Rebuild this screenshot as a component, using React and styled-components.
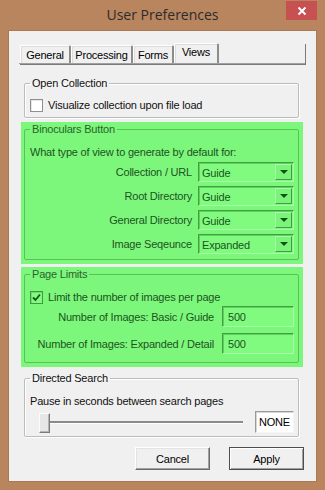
import React from 'react';
import styled, { createGlobalStyle } from 'styled-components';

const GlobalStyle = createGlobalStyle`
	html, body {
		margin: 0;
		padding: 0;
		width: 325px;
		height: 490px;
		overflow: hidden;
		background: #b9855f;
	}
	* {
		box-sizing: border-box;
	}
`;

const FONT = `"Liberation Sans", Arial, sans-serif`;

// window chrome
const Window = styled.div`
	width: 325px;
	height: 490px;
	background: #b9855f;
	display: flex;
	flex-direction: column;
	font-family: ${FONT};
	font-size: 11px;
	letter-spacing: -0.2px;
	color: #111;
`;

const TitleBar = styled.div`
	height: 30px;
	display: grid;
	grid-template-columns: 1fr auto 1fr;
	align-items: start;
`;

const Title = styled.div`
	grid-column: 2;
	line-height: 30px;
	font-family: "Open Sans", "Noto Sans", sans-serif;
	font-size: 14px;
	letter-spacing: 0;
	color: #2b2b2b;
`;

const CloseButton = styled.div`
	grid-column: 3;
	justify-self: end;
	margin-right: 8px;
	margin-top: 1px;
	width: 31px;
	height: 19px;
	background: #c75050;
	display: flex;
	align-items: center;
	justify-content: center;
`;

const Client = styled.div`
	margin: 0 8px;
	height: 452px;
	background: #f0f0f0;
	border: 1px solid #a67a57;
	padding: 12px 10px 0 10px;
	display: flex;
	flex-direction: column;
`;

// tabs
const TabStrip = styled.div`
	height: 21px;
	padding-left: 1px;
	display: flex;
	align-items: flex-end;
	border-bottom: 1px solid #a0a0a0;
	box-shadow: 1px 1px 0 #7a7a7a;
	margin-right: 1px;
`;

const Tab = styled.div`
	width: ${p => p.$w}px;
	height: ${p => (p.$active ? 20 : 18)}px;
	display: flex;
	align-items: center;
	justify-content: center;
	padding-bottom: ${p => (p.$active ? 3 : 0)}px;
	background: #f0f0f0;
	border-top: 1px solid #fff;
	border-left: 1px solid #fff;
	border-right: 2px solid #8c8c8c;
	border-radius: 2px 2px 0 0;
	box-shadow: inset 1px 1px 0 #dcdcdc;
	color: #000;
`;

const Panel = styled.div`
	padding: 0 3px 0 2px;
	display: flex;
	flex-direction: column;
`;

// group boxes
const Section = styled.div`
	margin-top: ${p => p.$mt || 0}px;
	padding: ${p => (p.$hl ? 0 : 4)}px 4px 4px 3px;
	background: ${p => (p.$hl ? '#7cf77c' : 'transparent')};
	color: ${p => (p.$hl ? '#1d541d' : '#111')};
`;

const Group = styled.fieldset`
	margin: 0;
	min-width: 0;
	padding: 0 4px ${p => p.$pb}px 5px;
	border: 1px solid ${p => (p.$hl ? '#55c455' : '#bcbcbc')};
	border-radius: 2px;
	box-shadow: ${p => (p.$hl ? 'none' : 'inset 1px 1px 0 #fff, 1px 1px 0 #fff')};
`;

const Legend = styled.legend`
	padding: 0 2px;
	margin-left: 0;
	height: 14px;
	line-height: 14px;
	font-size: 11px;
	color: ${p => (p.$hl ? '#2a652a' : '#111')};
`;

const Line = styled.div`
	margin-top: ${p => p.$mt || 0}px;
	height: 16px;
	line-height: 16px;
	white-space: nowrap;
`;

const CheckRow = styled.label`
	margin-top: ${p => p.$mt || 0}px;
	height: 16px;
	display: flex;
	align-items: center;
	white-space: nowrap;
`;

const CheckBox = styled.span`
	width: 13px;
	height: 13px;
	margin-right: 5px;
	flex: none;
	display: flex;
	align-items: center;
	justify-content: center;
	border: 1px solid ${p => (p.$hl ? '#3d9a3d' : '#8e8f8f')};
	background: ${p => (p.$hl ? '#80fb80' : '#fff')};
	box-shadow: inset 1px 1px 0 ${p => (p.$hl ? '#6ae06a' : '#e6e6e6')};
`;

const FormGrid = styled.div`
	margin-top: ${p => p.$mt}px;
	display: grid;
	grid-template-columns: 1fr ${p => p.$field}px;
	column-gap: ${p => p.$gap}px;
	row-gap: ${p => p.$rowGap}px;
	align-items: center;
`;

const Label = styled.div`
	text-align: right;
	white-space: nowrap;
`;

const Combo = styled.div`
	height: 20px;
	display: flex;
	align-items: center;
	padding: 1px 1px 1px 3px;
	background: #80fb80;
	border: 1px solid;
	border-color: #3ea33e #a6ffa6 #a6ffa6 #3ea33e;
	box-shadow: inset 1px 1px 0 #5fcf5f;
`;

const ComboText = styled.span`
	flex: 1;
	padding-top: 1px;
`;

const DropButton = styled.span`
	width: 17px;
	height: 16px;
	display: flex;
	align-items: center;
	justify-content: center;
	background: #7af47a;
	border: 1px solid;
	border-color: #a8ffa8 #3e9e3e #3e9e3e #a8ffa8;
`;

const Arrow = styled.span`
	width: 0;
	height: 0;
	border-left: 4px solid transparent;
	border-right: 4px solid transparent;
	border-top: 4px solid #175017;
`;

const TextField = styled.div`
	height: 21px;
	display: flex;
	align-items: center;
	padding-left: 5px;
	background: #80fb80;
	border: 1px solid;
	border-color: #3ea33e #a6ffa6 #a6ffa6 #3ea33e;
	box-shadow: inset 1px 1px 0 #5fcf5f;
`;

// trackbar
const SliderRow = styled.div`
	margin-top: 2px;
	height: 22px;
	display: flex;
	align-items: center;
`;

const Track = styled.div`
	position: relative;
	flex: 1;
	height: 21px;
	margin: 0 12px 0 9px;
	display: flex;
	align-items: center;
`;

const TrackLine = styled.div`
	flex: 1;
	height: 3px;
	margin-left: 4px;
	background: #8a8a8a;
	border-bottom: 1px solid #fff;
`;

const Thumb = styled.div`
	position: absolute;
	left: 0;
	top: 1px;
	width: 11px;
	height: 20px;
	background: #e6e6e6;
	border: 1px solid;
	border-color: #fcfcfc #7a7a7a #7a7a7a #fcfcfc;
	box-shadow: inset -1px -1px 0 #b4b4b4;
`;

const ValueBox = styled.div`
	width: 39px;
	height: 22px;
	display: flex;
	align-items: center;
	justify-content: center;
	background: #fff;
	border: 1px solid;
	border-color: #9a9a9a #f4f4f4 #f4f4f4 #9a9a9a;
	box-shadow: inset 1px 1px 0 #d6d6d6;
	color: #000;
`;

// dialog buttons
const ButtonRow = styled.div`
	margin: 6px 2px 0 0;
	display: flex;
	justify-content: flex-end;
	gap: 19px;
`;

const Button = styled.div`
	width: 75px;
	height: 23px;
	display: flex;
	align-items: center;
	justify-content: center;
	background: #f0f0f0;
	color: #000;
	border: 1px solid;
	border-color: ${p => (p.$default ? '#4e4e4e' : '#fff #6a6a6a #6a6a6a #fff')};
	box-shadow: ${p =>
		p.$default
			? 'inset 1px 1px 0 #fff, inset -1px -1px 0 #a0a0a0'
			: 'inset -1px -1px 0 #a0a0a0, inset 1px 1px 0 #e3e3e3'};
`;

const Check = () => (
	<svg width="9" height="9" viewBox="0 0 9 9">
		<path d="M1 4.5 L3.5 7 L8 1.5" fill="none" stroke="#175017" strokeWidth="1.8" />
	</svg>
);

const views = [
	{ label: 'Collection / URL', value: 'Guide' },
	{ label: 'Root Directory', value: 'Guide' },
	{ label: 'General Directory', value: 'Guide' },
	{ label: 'Image Seqeunce', value: 'Expanded' },
];

const limits = [
	{ label: 'Number of Images: Basic / Guide', value: '500' },
	{ label: 'Number of Images: Expanded / Detail', value: '500' },
];

const tabs = [
	{ text: 'General', w: 51 },
	{ text: 'Processing', w: 62 },
	{ text: 'Forms', w: 41 },
	{ text: 'Views', w: 45, active: true },
];

export default function App() {
	return (
		<Window>
			<GlobalStyle />
			<TitleBar>
				<Title>User Preferences</Title>
				<CloseButton>
					<svg width="10" height="10" viewBox="0 0 10 10">
						<path d="M1.5 1.5 L8.5 8.5 M8.5 1.5 L1.5 8.5" stroke="#fff" strokeWidth="2" />
					</svg>
				</CloseButton>
			</TitleBar>
			<Client>
				<TabStrip>
					{tabs.map(t => (
						<Tab key={t.text} $w={t.w} $active={t.active}>
							{t.text}
						</Tab>
					))}
				</TabStrip>
				<Panel>
					<Section $mt={8}>
						<Group $pb={4}>
							<Legend>Open Collection</Legend>
							<CheckRow $mt={7}>
								<CheckBox />
								Visualize collection upon file load
							</CheckRow>
						</Group>
					</Section>

					<Section $hl>
						<Group $hl $pb={5}>
							<Legend $hl>Binoculars Button</Legend>
							<Line $mt={8}>What type of view to generate by default for:</Line>
							<FormGrid $mt={2} $field={96} $gap={6} $rowGap={4}>
								{views.map(v => (
									<React.Fragment key={v.label}>
										<Label>{v.label}</Label>
										<Combo>
											<ComboText>{v.value}</ComboText>
											<DropButton>
												<Arrow />
											</DropButton>
										</Combo>
									</React.Fragment>
								))}
							</FormGrid>
						</Group>
					</Section>

					<Section $hl $mt={3}>
						<Group $hl $pb={8}>
							<Legend $hl>Page Limits</Legend>
							<CheckRow $mt={8}>
								<CheckBox $hl>
									<Check />
								</CheckBox>
								Limit the number of images per page
							</CheckRow>
							<FormGrid $mt={1} $field={72} $gap={8} $rowGap={6}>
								{limits.map(l => (
									<React.Fragment key={l.label}>
										<Label>{l.label}</Label>
										<TextField>{l.value}</TextField>
									</React.Fragment>
								))}
							</FormGrid>
						</Group>
					</Section>

					<Section>
						<Group $pb={3}>
							<Legend>Directed Search</Legend>
							<Line $mt={8}>Pause in seconds between search pages</Line>
							<SliderRow>
								<Track>
									<TrackLine />
									<Thumb />
								</Track>
								<ValueBox>NONE</ValueBox>
							</SliderRow>
						</Group>
					</Section>
				</Panel>
				<ButtonRow>
					<Button>Cancel</Button>
					<Button $default>Apply</Button>
				</ButtonRow>
			</Client>
		</Window>
	);
}
